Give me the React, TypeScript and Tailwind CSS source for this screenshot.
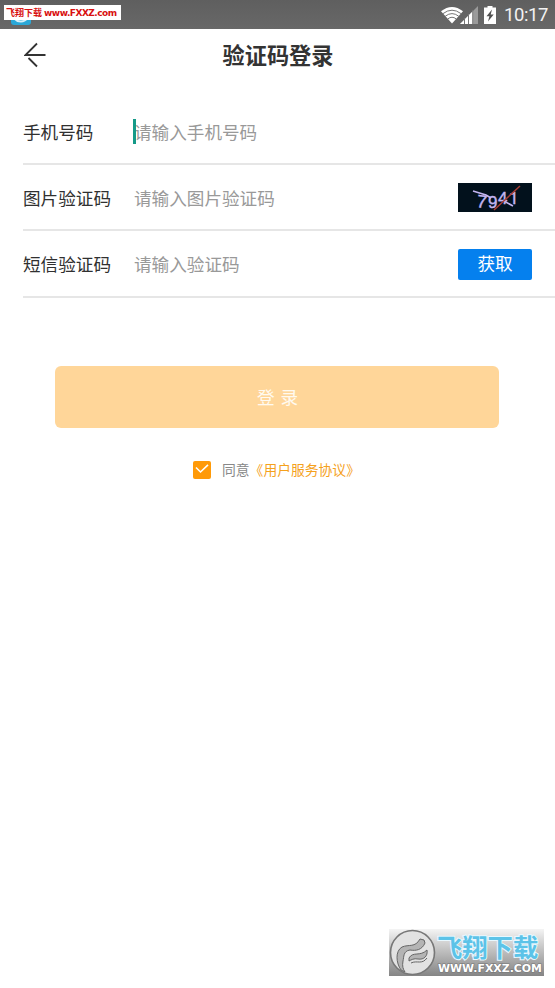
import type { ReactNode } from "react";

const StatusBar = () => {
  return (
    <div className="relative flex h-[29px] items-center justify-end bg-gradient-to-b from-[#5f5f5f] to-[#686868] pr-[6px]">
      {/* app notification, half hidden by the site tag */}
      <div className="absolute left-[11px] top-[8px] h-[17px] w-[20px] rounded-[3px] bg-[#2ba8d8]">
        <svg width="20" height="17" viewBox="0 0 20 17" fill="none">
          <path d="M4 11C7 14.5 13 14.5 16 10.5" stroke="#d9f1fa" strokeWidth="2" />
        </svg>
      </div>
      <div className="absolute left-[4px] top-[5px] flex h-[15px] w-[117px] items-center gap-[2px] whitespace-nowrap bg-white pl-[2px] font-bold leading-[15px] text-[#d81010]">
        <span className="text-[9px]">飞翔下载</span>
        <span className="pt-[1px] font-['DejaVu_Sans',sans-serif] text-[9px] tracking-[-0.5px]">www.FXXZ.com</span>
      </div>

      {/* wifi */}
      <svg width="22" height="18" viewBox="0 0 22 18" className="shrink-0">
        <path d="M0 5.3Q11 -3.2 22 5.3L11 17.5Z" fill="#fff" />
        <path d="M2 7.6Q11 0.8 20 7.6M4.3 10.2Q11 5 17.7 10.2M6.8 12.9Q11 9.6 15.2 12.9" stroke="#656565" strokeWidth="0.9" fill="none" />
      </svg>
      {/* signal */}
      <svg width="18" height="18" viewBox="0 0 18 18" className="-ml-[3px] shrink-0">
        <path d="M0 18L18 0V18Z" fill="#9a9a9a" />
        <path d="M0 18L13 5V18Z" fill="#fff" />
        <path d="M4.5 12V18M8.5 8V18M12.7 4V18" stroke="#777" strokeWidth="1" />
      </svg>
      {/* battery */}
      <svg width="12" height="18" viewBox="0 0 12 18" className="ml-[6px] shrink-0">
        <path d="M3.5 0H8.5V1.5H12V18H0V1.5H3.5Z" fill="#fff" />
        <path d="M8 3.5L2.5 10.3H5.4L4 15.5L9.7 8.5H6.7Z" fill="#505050" />
      </svg>
      <span className="ml-[8px] w-[45px] whitespace-nowrap pt-[2px] font-[Roboto,sans-serif] text-[18.5px] leading-none tracking-[-0.4px] text-[#f2f2f2]">10:17</span>
    </div>
  );
};

const Captcha = () => {
  return (
    <svg width="74" height="29" viewBox="0 0 74 29" className="-mt-[2px] bg-[#02111c]">
      <g fill="#c3b5f0" stroke="#c3b5f0" strokeWidth="0.4" fontSize="18" className="font-['Liberation_Sans',sans-serif]">
        <text transform="translate(18 24) rotate(8)">7</text>
        <text x="30" y="25" fontSize="17">9</text>
        <text x="40" y="21" fontSize="17">4</text>
        <text x="51" y="21" fontSize="17" className="font-[Roboto,sans-serif]">1</text>
      </g>
      <path d="M15 8L28 12L33 15M46 18L55 23" stroke="#c3b5f0" strokeWidth="1.6" fill="none" />
      <path d="M36 27L62 3" stroke="#a83c32" strokeWidth="1.5" />
    </svg>
  );
};

type FieldProps = {
  label: string;
  hint: string;
  focused?: boolean;
  children?: ReactNode;
};

const Field = ({ label, hint, focused, children }: FieldProps) => {
  return (
    <div className="flex h-[66.4px] items-center border-b-2 border-[#e6e6e6] pr-[23px] pt-[2px] text-[17.6px]">
      <span className="w-[111px] text-[#303030]">{label}</span>
      <div className="relative flex-1 text-[#999]">
        {focused && <i className="absolute -left-[1px] top-0 h-[25px] w-[3px] bg-[#159a88]" />}
        {hint}
      </div>
      {children}
    </div>
  );
};

const Watermark = () => {
  return (
    <div className="ml-[389px] mt-auto mb-[12px] flex h-[47px] w-[155px] bg-gradient-to-b from-[#f4f4f4] to-[#858585]">
      <svg width="48" height="47" viewBox="0 0 48 47" className="shrink-0">
        <circle cx="23.5" cy="23.5" r="22" fill="#e2e2e2" stroke="#777" strokeWidth="1.6" />
        <g fill="#b4b4b4" stroke="#666" strokeWidth="1" strokeLinejoin="round">
          <path d="M12 41C7 34 6 22 13 18C20 15 26 19 31 10L35 11L36 14C33 21 27 22 21 21C14 22 15 28 14 32C13 37 14 40 16 43Z" />
          <path d="M20 29C24 22 31 28 38 21C39 27 35 31 29 30C25 29 22 31 20 32Z" />
          <path d="M22 34C28 31 33 36 38 29" fill="none" />
        </g>
      </svg>
      <div className="flex flex-col">
        <svg width="107" height="33" viewBox="0 0 107 33" className="overflow-visible">
          <text x="0" y="27.5" fontSize="25.3" fontWeight="700" fill="#5cc3e8" stroke="#e8f8ff" strokeWidth="2" paintOrder="stroke">飞翔下载</text>
        </svg>
        <svg width="107" height="14" viewBox="0 0 107 14">
          <text x="1" y="10" fontSize="10.5" fontWeight="700" textLength="104" lengthAdjust="spacingAndGlyphs" fill="#fff" stroke="#777" strokeWidth="1.2" paintOrder="stroke" className="font-['DejaVu_Sans',sans-serif]">WWW.FXXZ.COM</text>
        </svg>
      </div>
    </div>
  );
};

const App = () => {
  return (
    <div className="flex h-[988px] w-[555px] flex-col overflow-hidden bg-white font-['Noto_Sans_CJK_SC',sans-serif]">
      <StatusBar />

      <header className="grid h-[51px] grid-cols-[80px_1fr_80px] items-center">
        {/* lower stroke stops short of the tip */}
        <svg width="22" height="26" viewBox="0 0 22 26" fill="none" stroke="#333" strokeWidth="1.8" className="ml-[24px]">
          <path d="M21.5 13H1.5L13 1.5M4.5 16L13 24.5" />
        </svg>
        <h1 className="pl-[1px] text-center text-[22.2px] font-bold leading-none text-[#333]">验证码登录</h1>
      </header>

      <div className="mt-[18.6px] ml-[23px]">
        <Field label="手机号码" hint="请输入手机号码" focused />
        <Field label="图片验证码" hint="请输入图片验证码">
          <Captcha />
        </Field>
        <Field label="短信验证码" hint="请输入验证码">
          <button className="-mt-[1px] h-[31px] w-[74px] rounded-[2px] bg-[#0580ee] pb-[2px] text-[17.6px] leading-none text-white">获取</button>
        </Field>
      </div>

      <button className="ml-[55px] mt-[68.4px] h-[62px] w-[444px] rounded-[6px] bg-[#ffd699] pl-[1px] text-[17.6px] text-[#fffaf0] [word-spacing:2px]">登 录</button>

      <div className="ml-[193px] mt-[31px] flex items-center text-[13.8px] leading-[20px]">
        <span className="mt-[1px] flex h-[18px] w-[18px] items-center justify-center rounded-[2px] bg-[#ff9a08]">
          <svg width="14" height="10" viewBox="0 0 14 10" fill="none" stroke="#fff" strokeWidth="1.6" className="-mt-[2px]">
            <path d="M1 3.5L5.5 8L13 0.8" />
          </svg>
        </span>
        <span className="ml-[11px] text-[#888]">同意</span>
        <span className="text-[#f5a11c]">《用户服务协议》</span>
      </div>

      <Watermark />
    </div>
  );
};

export default App;
